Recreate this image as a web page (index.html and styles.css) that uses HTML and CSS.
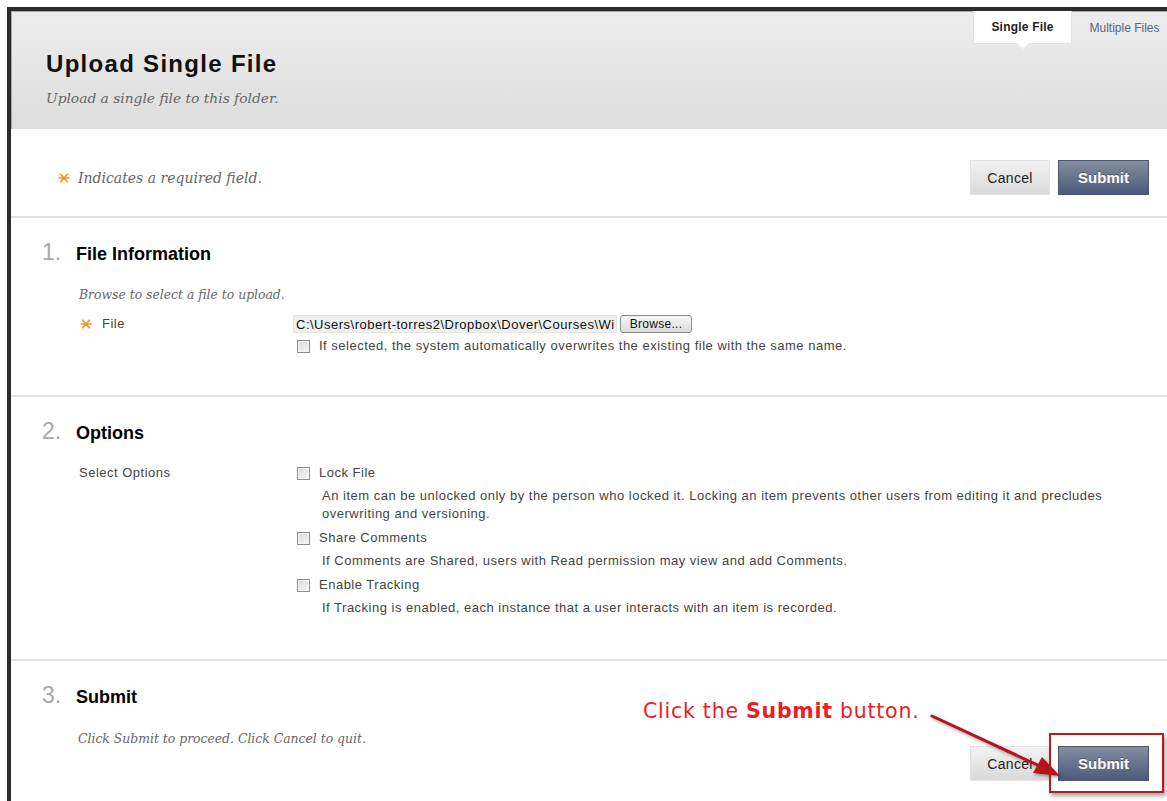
FILE: index.html
```html
<!DOCTYPE html>
<html lang="en">
<head>
<meta charset="utf-8">
<title>Upload Single File</title>
<link rel="stylesheet" href="styles.css">
</head>
<body>
<div class="frame">
  <header class="page-head">
    <div class="head-text">
      <h1 class="page-title">Upload Single File</h1>
      <p class="page-sub">Upload a single file to this folder.</p>
    </div>
    <nav class="mode-tabs">
      <span class="mode-tab active">Single File</span>
      <span class="mode-tab">Multiple Files</span>
    </nav>
  </header>

  <div class="req-bar">
    <p class="req-note"><svg class="req" viewBox="0 0 12 12"><path d="M1 6H11M2.6 2.2L9.4 9.8M9.4 2.2L2.6 9.8"/></svg>Indicates a required field.</p>
    <div class="actions">
      <button class="btn btn-cancel">Cancel</button>
      <button class="btn btn-submit">Submit</button>
    </div>
  </div>

  <section class="step step-file">
    <h2 class="step-title"><span class="step-num">1.</span>File Information</h2>
    <p class="hint">Browse to select a file to upload.</p>
    <div class="field">
      <div class="field-label"><svg class="req" viewBox="0 0 12 12"><path d="M1 6H11M2.6 2.2L9.4 9.8M9.4 2.2L2.6 9.8"/></svg>File</div>
      <div class="field-value">
        <div class="file-row">
          <span class="file-path">C:\Users\robert-torres2\Dropbox\Dover\Courses\Wi</span>
          <span class="browse">Browse...</span>
        </div>
        <label class="check-row small"><span class="box"></span>If selected, the system automatically overwrites the existing file with the same name.</label>
      </div>
    </div>
  </section>

  <section class="step step-options">
    <h2 class="step-title"><span class="step-num">2.</span>Options</h2>
    <div class="field">
      <div class="field-label plain">Select Options</div>
      <div class="field-value options">
        <div class="option">
          <label class="check-row"><span class="box"></span>Lock File</label>
          <p class="opt-desc">An item can be unlocked only by the person who locked it. Locking an item prevents other users from editing it and precludes overwriting and versioning.</p>
        </div>
        <div class="option">
          <label class="check-row"><span class="box"></span>Share Comments</label>
          <p class="opt-desc">If Comments are Shared, users with Read permission may view and add Comments.</p>
        </div>
        <div class="option">
          <label class="check-row"><span class="box"></span>Enable Tracking</label>
          <p class="opt-desc">If Tracking is enabled, each instance that a user interacts with an item is recorded.</p>
        </div>
      </div>
    </div>
  </section>

  <section class="step step-submit">
    <h2 class="step-title"><span class="step-num">3.</span>Submit</h2>
    <div class="submit-row">
      <p class="hint">Click Submit to proceed. Click Cancel to quit.</p>
      <div class="actions">
        <button class="btn btn-cancel">Cancel</button>
        <button class="btn btn-submit">Submit</button>
      </div>
    </div>
  </section>
</div>

<div class="callout">Click the <b>Submit</b> button.</div>
<svg class="pointer" width="160" height="80" viewBox="0 0 160 80">
  <defs>
    <filter id="soft" x="-20%" y="-20%" width="140%" height="140%">
      <feDropShadow dx="1.5" dy="2" stdDeviation="1.5" flood-color="#000" flood-opacity="0.35"/>
    </filter>
  </defs>
  <g filter="url(#soft)">
    <path d="M4 5L116 57" stroke="#b5121b" stroke-width="3" fill="none" stroke-linecap="round"/>
    <path d="M132 65L105 62L114 46Z" fill="#b5121b"/>
  </g>
</svg>
<div class="focus-box"></div>
</body>
</html>
```

FILE: styles.css
```css
* { box-sizing: border-box; }

html, body {
  margin: 0;
  padding: 0;
  background: #fff;
  overflow: hidden;
}

body {
  width: 1167px;
  height: 801px;
  position: relative;
  font-family: "Liberation Sans", Arial, sans-serif;
  color: #333;
}

.frame {
  margin: 7px 0 0 7px;
  height: 794px;
  border-top: 4px solid #2b2b2b;
  border-left: 4px solid #2b2b2b;
}

/* ---------- page header ---------- */
.page-head {
  height: 118px;
  display: flex;
  justify-content: space-between;
  align-items: flex-start;
  background: linear-gradient(#ededed, #dddddd);
  box-shadow: inset 1px 1px 0 #a8a8a8;
}

.head-text {
  padding: 39px 0 0 35px;
}

.page-title {
  margin: 0;
  font-size: 24px;
  line-height: 28px;
  font-weight: bold;
  letter-spacing: 1.3px;
  color: #111;
}

.page-sub {
  margin: 11px 0 0 0;
  font-family: "DejaVu Serif", Georgia, serif;
  font-style: italic;
  font-size: 13.8px;
  line-height: 18px;
  color: #666;
}

.mode-tabs {
  display: flex;
}

.mode-tab {
  width: 93px;
  height: 33px;
  display: flex;
  align-items: center;
  justify-content: center;
  padding-left: 8px;
  font-size: 12px;
  color: #56648a;
}

.mode-tab.active {
  position: relative;
  width: 99px;
  padding-left: 0;
  margin-right: 2px;
  background: #fff;
  border: 1px solid #e2e2e2;
  border-top: 0;
  font-weight: bold;
  letter-spacing: 0.2px;
  color: #222;
}

.mode-tab.active::after {
  content: "";
  position: absolute;
  left: 43px;
  bottom: -6px;
  border-left: 6px solid transparent;
  border-right: 6px solid transparent;
  border-top: 6px solid #fff;
}

/* ---------- required note and actions ---------- */
.req-bar {
  height: 89px;
  display: flex;
  justify-content: space-between;
  align-items: center;
  padding: 12px 18px 2px 47px;
  border-bottom: 2px solid #e1e1e1;
}

.req-note {
  margin: 0;
  display: flex;
  align-items: center;
  font-family: "DejaVu Serif", Georgia, serif;
  font-style: italic;
  font-size: 14px;
  color: #666;
}

.req {
  width: 12px;
  height: 12px;
  margin-right: 8px;
  flex: none;
}

.req path {
  stroke: #f7941d;
  stroke-width: 1.6;
  fill: none;
  stroke-linecap: round;
}

.actions {
  display: flex;
  gap: 8px;
}

.btn {
  height: 35px;
  padding: 0;
  font-family: "Liberation Sans", Arial, sans-serif;
  font-size: 14px;
  cursor: pointer;
}

.btn-cancel {
  width: 80px;
  color: #222;
  letter-spacing: 0.3px;
  background: linear-gradient(#f2f2f2, #d9d9d9);
  border: 1px solid #e4e4e4;
}

.btn-submit {
  width: 91px;
  color: #fff;
  font-weight: bold;
  font-size: 15px;
  background: linear-gradient(#838ea0, #4c5a7a);
  border: 1px solid #4a5670;
  text-shadow: 0 -1px 0 rgba(0, 0, 0, 0.3);
}

/* ---------- steps ---------- */
.step {
  border-bottom: 2px solid #e1e1e1;
}

.step-file { height: 179px; padding-top: 22px; }
.step-options { height: 264px; padding-top: 22px; }
.step-submit { border-bottom: 0; padding-top: 22px; }

.step-title {
  margin: 0 0 0 31px;
  display: flex;
  align-items: baseline;
  font-size: 18px;
  line-height: 24px;
  font-weight: bold;
  color: #000;
}

.step-num {
  width: 34px;
  font-size: 23px;
  font-weight: normal;
  color: #a9a9a9;
}

.hint {
  margin: 19px 0 0 68px;
  font-family: "DejaVu Serif", Georgia, serif;
  font-style: italic;
  font-size: 12.4px;
  line-height: 20px;
  color: #666;
}

.field {
  display: flex;
  margin-left: 68px;
  font-size: 13px;
  letter-spacing: 0.5px;
  color: #444;
}

.step-file .field { margin-top: 10px; }
.step-options .field { margin-top: 19px; }

.field-label {
  width: 214px;
  flex: none;
  display: flex;
  align-items: flex-start;
  line-height: 18px;
}

.field-label .req {
  margin: 3px 10px 0 1px;
}

.file-row {
  display: flex;
  align-items: center;
  gap: 3px;
}

.file-path {
  width: 324px;
  height: 18px;
  line-height: 17px;
  padding-left: 2px;
  background: #efefef;
  border: 1px solid #e4e4e4;
  color: #111;
  font-size: 13px;
  letter-spacing: 0.5px;
  white-space: nowrap;
  overflow: hidden;
}

.browse {
  width: 72px;
  height: 18px;
  line-height: 16px;
  text-align: center;
  font-size: 12px;
  letter-spacing: 0.3px;
  color: #111;
  background: linear-gradient(#f6f6f6, #dcdcdc);
  border: 1px solid #8c8c8c;
  border-radius: 3px;
}

.check-row {
  display: flex;
  align-items: center;
  height: 18px;
  line-height: 18px;
  color: #444;
}

.check-row.small { margin-top: 4px; }

.box {
  width: 13px;
  height: 13px;
  margin: 0 9px 0 4px;
  flex: none;
  border: 1px solid #8e8f8f;
  background: linear-gradient(135deg, #d9d9d9, #f7f7f7);
  box-shadow: inset 0 0 0 1px #f4f4f4;
}

.options {
  display: flex;
  flex-direction: column;
  gap: 6px;
}

.opt-desc {
  margin: 5px 0 0 29px;
  max-width: 790px;
  line-height: 18px;
}

.submit-row {
  display: flex;
  justify-content: space-between;
  align-items: flex-start;
  padding-right: 18px;
}

.submit-row .hint {
  margin-top: 20px;
  margin-left: 67px;
}

.submit-row .actions {
  margin-top: 37px;
}

/* ---------- annotation overlay ---------- */
.callout {
  position: absolute;
  left: 643px;
  top: 698px;
  font-family: "DejaVu Sans", Verdana, sans-serif;
  font-size: 20.5px;
  letter-spacing: 0.75px;
  line-height: 26px;
  color: #ee1c24;
}

.pointer {
  position: absolute;
  left: 928px;
  top: 711px;
}

.focus-box {
  position: absolute;
  left: 1049px;
  top: 733px;
  width: 115px;
  height: 60px;
  border: 2px solid #c3161e;
  box-shadow: 2px 3px 4px rgba(0, 0, 0, 0.35);
}
```
